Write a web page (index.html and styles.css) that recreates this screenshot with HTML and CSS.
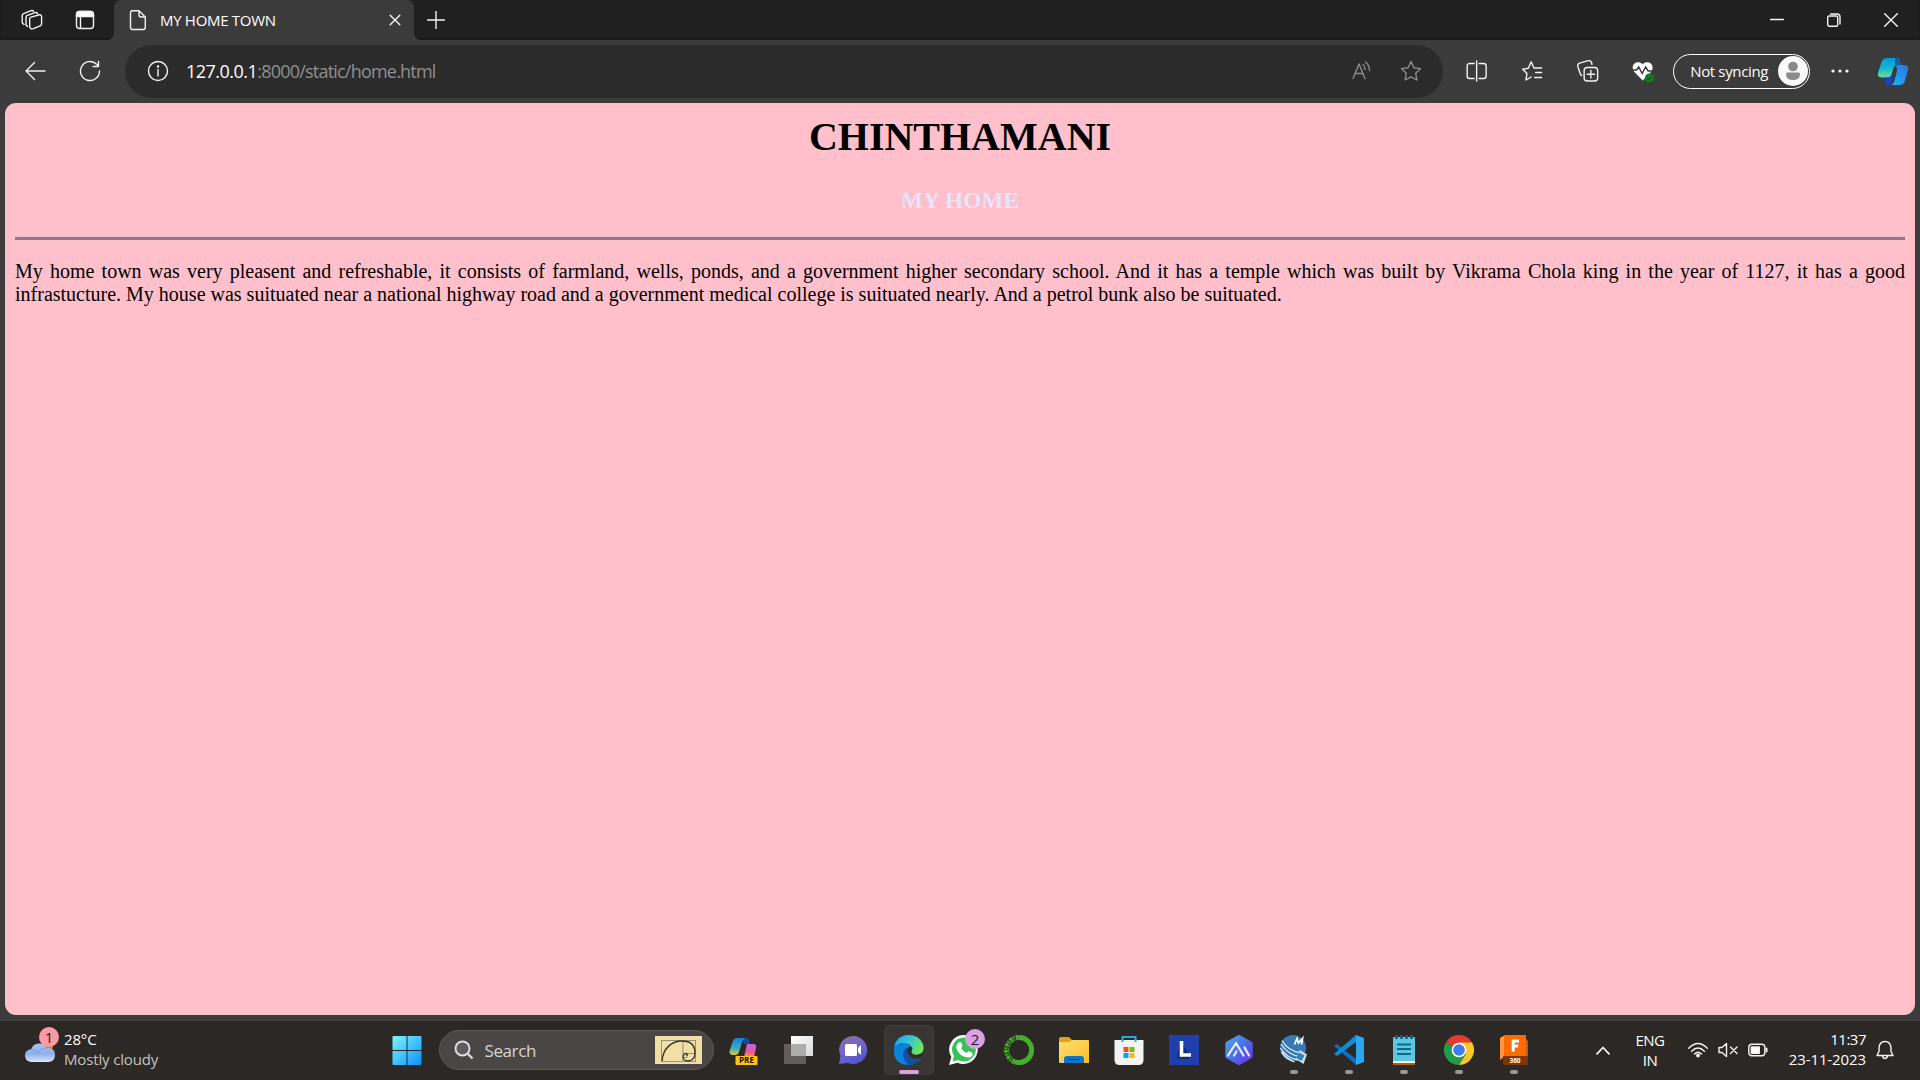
FILE: index.html
```html
<!DOCTYPE html>
<html lang="en">
<head>
<meta charset="utf-8">
<title>MY HOME TOWN</title>
<link rel="stylesheet" href="styles.css">
</head>
<body>
<header class="tabstrip">
  <div class="strip-tools">
    <svg class="line i22" viewBox="0 0 22 22"><path d="M8.600 10.200q0-1.500 1.400-2L17.600 6q3-.8 3 1.800v7q0 1.500-1.400 2l-6.800 2.800q-2.800 1-3.600-1z"/><path d="M6.500 17.500L5 15.700V8.500q0-1.500 1.400-2.100L14 3.700q1.600-.6 2.600.8"/><path d="M3 15.500L1.200 13.800V6.700q0-1.500 1.400-2.100L10 1.700q1.600-.6 2.600.6"/></svg>
    <svg class="line i22" viewBox="0 0 22 22"><rect x="2.500" y="2.500" width="17" height="17" rx="3"/><path class="fill" d="M2.500 6q0-3.500 3.500-3.500h10q3.500 0 3.500 3.500v1.500h-17z"/><path d="M6.500 8v11"/></svg>
  </div>
  <div class="tab">
    <svg class="line i22" viewBox="0 0 22 22"><path d="M4.500 1.800H12l6.300 6.200v10.300q0 2.200-2.200 2.200H5.500q-2 0-2-2.200V4q0-2.200 2-2.200M12 1.800V6q0 2 2 2h4.300"/></svg>
    <span class="tab-title">MY HOME TOWN</span>
    <svg class="line i12" viewBox="0 0 12 12"><path d="M1.200 1.200l9.600 9.600M10.800 1.200L1.200 10.800"/></svg>
  </div>
  <svg class="line newtab" viewBox="0 0 18 18"><path d="M9 .5v17M.5 9h17"/></svg>
  <div class="win-controls">
    <svg class="line i14" viewBox="0 0 14 14"><path d="M.5 6.500h13"/></svg>
    <svg class="line i14" viewBox="0 0 14 14"><rect x=".7" y="3" width="10" height="10.300" rx="1.500"/><path d="M3.500 1h6.500q3 0 3 3v7"/></svg>
    <svg class="line i14" viewBox="0 0 14 14"><path d="M.7 .7l12.600 12.600M13.300 .7L.7 13.300"/></svg>
  </div>
</header>

<nav class="toolbar">
  <div class="nav-buttons">
    <svg class="line i22" viewBox="0 0 22 22"><path d="M10.500 2.500L2 11l8.500 8.500M2 11h19"/></svg>
    <svg class="line i22" viewBox="0 0 22 22"><path d="M20.500 11a9.500 9.500 0 1 1-2.800-6.700l1.800 1.800M19.500 1.500v5h-5.300"/></svg>
  </div>
  <div class="address">
    <svg class="line i22" viewBox="0 0 22 22"><circle cx="11" cy="11" r="9.500"/><path d="M11 9.500V16"/><circle class="fill" cx="11" cy="6.500" r=".6"/></svg>
    <span class="url"><b>127.0.0.1</b>:8000/static/home.html</span>
    <svg class="line dim cell50" viewBox="0 0 22 22"><path d="M3 18.500L9 4l6 14.500M5 13.500h8"/><path d="M13 4.500q2 1.700 2 5M15.500 2q4 3 4 8.500"/></svg>
    <svg class="line dim cell50" viewBox="0 0 22 22"><path d="M11 1.500l2.900 6.200 6.700.9-4.900 4.700 1.200 6.700-5.900-3.200L5.100 20l1.200-6.700L1.400 8.600l6.700-.9z"/></svg>
  </div>
  <div class="actions">
    <svg class="line" viewBox="0 0 22 22"><path d="M8.500 3.500H4q-2.500 0-2.500 2.500v10q0 2.500 2.500 2.500h4.500M11 1v20M13.500 3.500H18q2.500 0 2.500 2.500v10q0 2.500-2.500 2.500h-4.500"/></svg>
    <svg class="line" viewBox="0 0 22 22"><path d="M10.500 17l-5.200 3 1-6.500L2 9.200l5.700-.9 2.800-6.500 2.800 6.200h7.700M15 12.500h6M14 17.500h7"/></svg>
    <svg class="line" viewBox="0 0 22 22"><rect x="7.500" y="7.500" width="13.500" height="13.500" rx="3"/><path d="M14.200 10.500v7.500M10.500 14.200H18M5 15.500q-1-.5-1.400-1.800L1.200 6.500Q.5 4 3 3.200l8.500-2.500q2.500-.5 3.300 1.800l.5 1.800"/></svg>
    <svg viewBox="0 0 22 22"><path fill="#fff" d="M11 20.500L2.700 12C-2.500 5 5.500-1 11 4.200c5.500-5.200 13.500.8 8.300 7.800z"/><path d="M0 10h5l2-3 3.500 6.500L14 7l2.500 4H22" fill="none" stroke="#3b3b3b" stroke-width="1.500"/><circle cx="17.800" cy="18" r="4.600" fill="#117d1d"/><path d="M15.800 18l1.500 1.500 2.600-3" fill="none" stroke="#0a450e"/></svg>
  </div>
  <div class="profile"><span>Not syncing</span>
    <svg viewBox="0 0 30 30"><circle cx="15" cy="15" r="15" fill="#fafafa"/><circle cx="15" cy="10.500" r="4.800" fill="#8a8a8a"/><path d="M9 16.500h12q1 0 1 1.500 0 6-7 6t-7-6q0-1.500 1-1.500" fill="#8a8a8a"/></svg>
  </div>
  <svg class="dots" viewBox="0 0 18 4"><circle cx="2" cy="2" r="1.600"/><circle cx="9" cy="2" r="1.600"/><circle cx="16" cy="2" r="1.600"/></svg>
  <svg class="copilot" viewBox="0 0 30 27" preserveAspectRatio="none">
    <defs>
      <linearGradient id="cpA" x1="0" y1="0" x2="0" y2="1"><stop offset="0" stop-color="#0797dc"/><stop offset=".5" stop-color="#13b6cf"/><stop offset="1" stop-color="#6bdc9a"/></linearGradient>
      <linearGradient id="cpB" x1="1" y1="0" x2="0" y2="1"><stop offset="0" stop-color="#2f6fe0"/><stop offset="1" stop-color="#14b8fa"/></linearGradient>
    </defs>
    <path fill="url(#cpA)" d="M9 0h10q2 0 2.500 2l1.500 5h-3q-3.500 0-4.500 3l-2 6.500q-.9 3-4 3H4q-5 0-4-4.500L3.500 4Q5 0 9 0"/>
    <path fill="#0f5f9e" d="M17 0h2q2 0 2.500 2l1.500 5h-3q-2 0-3 1z"/>
    <path fill="url(#cpB)" d="M20 7h6q5 0 4 5l-3.200 11q-1.200 4-5 4H13q2.500-1 3.500-4l2.500-10q.8-3-1.500-5z"/>
    <path fill="#1c3ed2" d="M7 19.500h2.500q3 0 4-2.500l1.500 2-1.500 5q-1 3-3.500 3-2 0-2.300-2.500z"/>
  </svg>
</nav>

<main class="page">
  <h1>CHINTHAMANI</h1>
  <h3>MY HOME</h3>
  <hr>
  <p>My home town was very pleasent and refreshable, it consists of farmland, wells, ponds, and a government higher secondary school. And it has a temple which was built by Vikrama Chola king in the year of 1127, it has a good infrastucture. My house was suituated near a national highway road and a government medical college is suituated nearly. And a petrol bunk also be suituated.</p>
</main>

<footer class="taskbar">
  <div class="weather">
    <svg viewBox="0 0 36 38">
      <defs><linearGradient id="cloud" x1="0" y1="0" x2="0" y2="1"><stop offset="0" stop-color="#a9c5f3"/><stop offset=".55" stop-color="#8faeea"/><stop offset="1" stop-color="#d6e6fb"/></linearGradient></defs>
      <circle cx="22" cy="20" r="6" fill="#f57a0a"/>
      <path fill="url(#cloud)" d="M6 36q-6-1-6-6.500Q0 24 6 23.500 8 17.500 14 17.500q5.500 0 7.500 4.500 8.500-1 8.500 7 0 6-6 7z"/>
      <path d="M4 24q6-1 9 3 3-5 9-5" fill="none" stroke="#7c9fe2"/>
    </svg>
    <span class="badge badge-news">1</span>
    <div class="weather-text"><span>28°C</span><span class="soft">Mostly cloudy</span></div>
  </div>

  <div class="app">
    <svg viewBox="0 0 30 30"><defs><linearGradient id="win" x1="0" y1="0" x2="1" y2="1"><stop offset="0" stop-color="#7df4ff"/><stop offset="1" stop-color="#0a91fb"/></linearGradient></defs><path fill="url(#win)" d="M.5 2q0-1 1-1h13v14H.5zM15.500 1h13q1 0 1 1v13h-14zM.5 16h14v14h-13q-1 0-1-1zM15.500 16h14v13q0 1-1 1h-13z"/></svg>
  </div>

  <div class="search">
    <svg class="lens" viewBox="0 0 20 20"><circle cx="8.500" cy="8.500" r="7" fill="#5f5b5a" stroke="#d9dbe0" stroke-width="2"/><path d="M13.500 13.500l5 5" stroke="#d9dbe0" stroke-width="2.400"/></svg>
    <span>Search</span>
    <svg class="doodle" viewBox="0 0 47 28"><rect width="47" height="28" fill="#f2dfa5"/><g fill="none" stroke="#999177" stroke-width="1"><rect x="6.500" y="4.500" width="34" height="21"/><path d="M28 4.500v21M28 17.500h12.500M32 17.500v4h-4"/></g><path d="M7 25C8 12 17 5 27 5c8 0 13 4 13 12 0 5-3 8-7 8-3 0-5-2-5-4 0-3 3-4 4-3v2" fill="none" stroke="#39352f" stroke-width="1.400"/></svg>
  </div>

  <div class="app">
    <svg viewBox="0 0 30 30"><defs><linearGradient id="preA" x1="0" y1="0" x2="0" y2="1"><stop offset="0" stop-color="#197ddc"/><stop offset=".6" stop-color="#37adc1"/><stop offset="1" stop-color="#e2c83a"/></linearGradient><linearGradient id="preB" x1="0" y1="0" x2="0" y2="1"><stop offset="0" stop-color="#b56bf0"/><stop offset=".6" stop-color="#ee5190"/><stop offset="1" stop-color="#fb9a62"/></linearGradient></defs>
      <path fill="#1547a8" d="M13 3h5q2 0 3 6h-6z"/><path fill="url(#preA)" d="M8 3h8q-2 1-3 4l-3 10q-1 3-4 3H4q-4 0-3.500-4L3.500 7Q4.500 3 8 3"/><path fill="url(#preB)" d="M18 9h6q4 0 3 4l-2 9H15z"/><rect x="6.500" y="21" width="22" height="9" rx="1" fill="#ffc20e"/><text x="17.500" y="28.300" class="pre">PRE</text></svg>
  </div>
  <div class="app">
    <svg viewBox="0 0 30 30"><defs><linearGradient id="tv" x1="0" y1="0" x2="1" y2="1"><stop offset="0" stop-color="#fff"/><stop offset="1" stop-color="#d8d8d8"/></linearGradient></defs><rect x="0" y="9" width="22" height="20" fill="#605f5e"/><rect x="7" y="1" width="22" height="20" fill="url(#tv)"/><rect x="7" y="9" width="15" height="12" fill="#adadad"/></svg>
  </div>
  <div class="app">
    <svg viewBox="1 0 30 30"><defs><linearGradient id="chat" x1="0" y1="0" x2=".5" y2="1"><stop offset="0" stop-color="#8b6b9b"/><stop offset=".5" stop-color="#7569c4"/><stop offset="1" stop-color="#5355d1"/></linearGradient></defs><path fill="url(#chat)" d="M15 1a14 14 0 1 1-5 27l-9 1 1.500-8A14 14 0 0 1 15 1"/><rect x="7" y="9" width="12" height="12" rx="1.500" fill="#fff"/><path fill="#fff" d="M20 13l3-3v10l-3-3z"/></svg>
  </div>
  <div class="app current">
    <svg viewBox="0 0 30 30"><defs><linearGradient id="edT" x1="0" y1="0" x2="1" y2=".5"><stop offset="0" stop-color="#1a9fe0"/><stop offset=".5" stop-color="#35c1dc"/><stop offset="1" stop-color="#6ce75b"/></linearGradient></defs>
      <path fill="#0c6fc4" d="M0 14Q1 0 15 0v28l2 2h-2Q1 30 0 14"/><path fill="#10509e" d="M11 13q-6 9 5 17 7 0 12-7-9 3-13-2-2-3 1-7z"/><path fill="url(#edT)" d="M.3 12Q3 0 15 0q10 0 14 9 3 11-9 11-5-1-2-5 0-7-9-7-5 0-8.700 4"/><path fill="#0b81da" d="M0 14Q3 7 10 8q5 1 7 4-5-1-7 4-3 8 4 14Q-1 29 0 14"/><path fill="#2f2d2c" d="M13 15q1-3.500 5-3 1 1 0 3-2 4 4 5 4 0 7-2l-1 4q-6 2-11-1-4-2-4-6"/></svg>
    <i class="running"></i>
  </div>
  <div class="app">
    <svg viewBox="0 0 30 30"><path fill="#fff" d="M15 0a14.500 14.500 0 1 1-6.500 27.800L0 30l2.300-8A14.500 14.500 0 0 1 15 0"/><path fill="#36c256" d="M15 2.500a12 12 0 1 1-6 22.500l-5.500 1.500L5 21A12 12 0 0 1 15 2.500"/><path fill="#fff" d="M9 8l2-1q1 0 1.500 1.300l1 2.500q0 1-1.500 2.200 2 3.500 5.500 5 1.500-2 2.500-1.700l3 1.500q1 .7.500 2-1 3-4.500 2.800Q10 21.500 7.300 13q-.5-3 1.700-5"/></svg>
    <span class="badge badge-chat">2</span>
  </div>
  <div class="app">
    <svg viewBox="0 0 30 30"><path d="M15 2.500a12.500 12.500 0 1 1-4 24.300" fill="none" stroke="#43b02a" stroke-width="5"/><path d="M11 26.800A12.500 12.500 0 0 1 15 2.500" fill="none" stroke="#43b02a" stroke-width="5" stroke-dasharray="3 .8 1.500 1"/><path d="M9 25A12.500 12.500 0 0 1 12 3" fill="none" stroke="#2c2926" stroke-width="1" stroke-dasharray="2 2"/></svg>
  </div>
  <div class="app">
    <svg viewBox="0 0 30 30"><defs><linearGradient id="fold" x1="0" y1="0" x2="1" y2="1"><stop offset="0" stop-color="#ffdf78"/><stop offset="1" stop-color="#fdbf22"/></linearGradient></defs><path fill="#e5a00d" d="M0 4q0-2 2-2h8l3 3h15v6H0z"/><path fill="url(#fold)" d="M0 7h10l3-2h16q1 0 1 1v22H1q-1 0-1-1z"/><path fill="#0f73c9" d="M5 28v-4q0-3 3-3h14q3 0 3 3v4z"/><path d="M9 24.500h12" stroke="#0a4a8a"/></svg>
  </div>
  <div class="app">
    <svg viewBox="0 0 30 30"><path d="M8.500 8V2h13v6" fill="none" stroke="#28aae1" stroke-width="2"/><path fill="#f3f3f3" d="M.5 5h29v20q0 5-5 5h-19q-5 0-5-5z"/><path d="M8.500 5v2M21.500 5v2" stroke="#28aae1" stroke-width="2"/><path fill="#f25022" d="M9.500 12h5v5h-5z"/><path fill="#7fba00" d="M15.500 12h5v5h-5z"/><path fill="#00a4ef" d="M9.500 18h5v5h-5z"/><path fill="#ffb900" d="M15.500 18h5v5h-5z"/></svg>
  </div>
  <div class="app">
    <svg viewBox="0 0 30 30"><rect width="30" height="30" fill="#1f3fae"/><path fill="#123069" d="M11 7l-3 15v2h12l2-3z"/><path d="M12.500 6v14H22" fill="none" stroke="#fff" stroke-width="3.600"/></svg>
  </div>
  <div class="app">
    <svg viewBox="0 0 30 30"><defs><linearGradient id="hex" x1="0" y1="0" x2="1" y2="1"><stop offset="0" stop-color="#4ea3e5"/><stop offset=".5" stop-color="#4c6fe3"/><stop offset="1" stop-color="#6a32f0"/></linearGradient></defs><path fill="url(#hex)" stroke="url(#hex)" stroke-width="4" stroke-linejoin="round" d="M15 2l11.700 6.500v13L15 28 3.300 21.500v-13z"/><path d="M4 20.500L12 8l7.500 12.500M10 20.500l2.500-4M20.500 12.500l4.500 8" fill="none" stroke="#e8ecff" stroke-width="2.200" stroke-linecap="round" stroke-linejoin="round"/></svg>
  </div>
  <div class="app">
    <svg viewBox="0 0 30 30"><circle cx="14" cy="13" r="13" fill="#3779b5"/><path d="M2 9q7 11 19 12.500M1.500 13q6 10 17 12M3 5.500Q9 16 22 18M2.500 17q5 7 13 10" fill="none" stroke="#e3edf5" stroke-width="1.300"/><path fill="#d5dde3" d="M21 15l7 4.500-3.500 9.500-8-5z"/><path fill="#2786b8" d="M20 17.500l5.500 3-3 5.500-5.500-3z"/><path d="M15.500 9.500l2.500-6 1.500 4.500 4-4.500-1 6" fill="none" stroke="#fff" stroke-width="1.800"/></svg>
    <i class="running"></i>
  </div>
  <div class="app">
    <svg viewBox="0 0 30 30"><path fill="#0d6dbd" d="M0 11l3-2 19 15v6z"/><path fill="#158bd5" d="M0 19l3 2L22 7V0z"/><path fill="#2ba7f2" d="M22 0l8 3v24l-8 3z"/></svg>
    <i class="running"></i>
  </div>
  <div class="app">
    <svg viewBox="0 0 30 30"><path fill="#b75a14" d="M4 26h22v4H4z"/><path fill="#f5f2ec" d="M4 25h22v3H4z"/><rect x="4" y="2" width="22" height="24" rx="1" fill="#5cc5df"/><path d="M8 9.500h14M8 14h14M8 19h14" stroke="#11678a" stroke-width="1.800"/><path d="M7.500 0v4M12.500 0v4M17.500 0v4M22.500 0v4" stroke="#145c7b" stroke-width="2.500"/></svg>
    <i class="running"></i>
  </div>
  <div class="app">
    <svg viewBox="0 0 30 30"><path fill="#e33b2e" d="M15 15L2 7.500a15 15 0 0 1 26 0z"/><path fill="#249a49" d="M15 15v0L2 7.500A15 15 0 0 0 15 30l7-11z"/><path fill="#fcc629" d="M15 7.500h13A15 15 0 0 1 15 30l7-11z"/><circle cx="15" cy="15" r="7.300" fill="#fff"/><circle cx="15" cy="15" r="5.800" fill="#3a7ded"/></svg>
    <i class="running"></i>
  </div>
  <div class="app">
    <svg viewBox="0 0 30 30"><path fill="#ff9547" d="M1 3l5-3v21l-5 4z"/><path fill="#ff6b00" d="M5 2q0-2 2-2h20v22H5z"/><path fill="#c95a08" d="M27 4l2 2v17h-2z"/><path fill="#803600" d="M4 21h25v9H7q-3 0-3-2z"/><path d="M14.200 16.500V6H20M14.200 11h5" fill="none" stroke="#fff" stroke-width="3"/><text x="16" y="28" class="pre f360">360</text></svg>
    <i class="running"></i>
  </div>

  <div class="tray">
    <svg class="line chevron" viewBox="0 0 14 9"><path d="M1 7.800L7 1.500l6 6.300"/></svg>
    <div class="lang"><span>ENG</span><span>IN</span></div>
    <div class="status">
      <svg class="line" viewBox="0 0 20 16"><path d="M.7 6.200q9.300-9.500 18.600 0M3.600 9.200q6.400-6.500 12.800 0M6.500 12q3.500-3.600 7 0"/><circle class="fill" cx="10" cy="13.500" r="1.200"/></svg>
      <svg class="line" viewBox="0 0 20 16"><path d="M1 5.500h3l4.500-4v13l-4.500-4H1zM12.500 5l6.500 6.500M19 5l-6.500 6.500"/></svg>
      <svg class="line" viewBox="0 0 20 16"><rect x=".8" y="2.300" width="16" height="11.500" rx="3"/><rect class="fill" x="3.300" y="5" width="8" height="6.200"/><path d="M18.500 6.500v3" stroke-width="2"/></svg>
    </div>
    <div class="clock"><span>11:37</span><span class="date">23-11-2023</span></div>
    <svg class="line bell" viewBox="0 0 18 20"><path d="M1 15.500l2-4V8q.5-6.500 6-6.500T15 8v3.500l2 4zM6.500 16q.5 2.500 2.500 2.500t2.500-2.500"/></svg>
  </div>
</footer>
</body>
</html>
```
FILE: styles.css
```css
* { box-sizing: border-box; }
body {
  margin: 0;
  width: 1920px;
  height: 1080px;
  overflow: hidden;
  display: grid;
  grid-template-rows: 40px 63px 912px 65px;
  background: #3b3b3b;
  color: #fff;
  font-family: "Open Sans", "Noto Sans", sans-serif;
}
svg { display: block; flex: none; }
.line { fill: none; stroke: #f2f2f2; stroke-width: 1.4; stroke-linecap: round; stroke-linejoin: round; }
.line .fill { fill: #fff; }
.dim { stroke: #8c8c8c; }
.i22 { width: 22px; height: 22px; }
.i14 { width: 14px; height: 14px; }
.i12 { width: 12px; height: 12px; }

.tabstrip { display: flex; background: #202020; box-shadow: inset 0 -2px 2px #1a1a1a; }
.strip-tools { width: 114px; display: flex; align-items: center; gap: 31px; padding-left: 21px; }
.tab { position: relative; width: 300px; display: flex; align-items: center; padding: 0 13.5px 0 13px; background: #3b3b3b; border-radius: 7px 7px 0 0; }
.tab::before, .tab::after { content: ""; position: absolute; bottom: 0; width: 6px; height: 6px; }
.tab::before { left: -6px; background: radial-gradient(circle at 0 0, transparent 5.5px, #3b3b3b 6px); }
.tab::after { right: -6px; background: radial-gradient(circle at 100% 0, transparent 5.5px, #3b3b3b 6px); }
.tab-title { flex: 1; padding: 0 0 1px 11px; font-size: 15px; letter-spacing: -0.3px; line-height: 20px; }
.newtab { width: 18px; height: 18px; margin: 11px 0 0 12.5px; }
.win-controls { margin-left: auto; display: flex; gap: 43px; padding: 13px 22px 0 0; }

.toolbar { display: flex; align-items: center; padding-bottom: 1px; }
.nav-buttons { width: 125px; display: flex; gap: 33px; padding-left: 24px; }
.address { width: 1318px; height: 53px; border-radius: 27px; background: #2b2b2b; display: flex; align-items: center; padding: 0 7px 0 21.5px; }
.url { flex: 1; padding-left: 17.5px; font-size: 18px; letter-spacing: -0.79px; color: #8f8f8f; }
.url b { font-weight: 400; color: #fff; letter-spacing: -0.52px; }
.cell50 { width: 50px; height: 22px; }
.actions { display: flex; padding-left: 6px; }
.actions svg { width: 55.3px; height: 22px; }
.profile { width: 137px; height: 35px; margin-left: 3px; border: 1.5px solid #fff; border-radius: 18px; display: flex; align-items: center; justify-content: space-between; padding: 0 1px 0 16px; font-size: 15px; letter-spacing: -0.35px; white-space: nowrap; }
.profile span { padding-bottom: 1px; }
.profile svg { width: 30px; height: 30px; }
.dots { width: 18px; height: 4px; margin-left: 21px; fill: #fff; }
.copilot { width: 30px; height: 27px; margin-left: 29px; }

.page { margin: 0 5px; padding: 11px 10px 10px; border-radius: 11px; background: #ffc0cb; color: #000; font: 20px/23px "Liberation Serif", serif; }
.page h1 { margin: 0; font-size: 40px; line-height: 46px; text-align: center; }
.page h3 { margin: 27px 0 0; font-size: 23.4px; line-height: 27px; text-align: center; color: #e6e6fa; }
.page hr { margin: 23px 0 0; height: 3px; border: 0; background: #808080; }
.page p { margin: 20px 0 0; text-align: justify; }

.taskbar { margin-top: 5px; height: 60px; display: flex; align-items: center; background: #2c2825; box-shadow: inset 0 1px #474443; }
.weather { position: relative; width: 379px; display: flex; align-items: center; padding-left: 25px; }
.weather > svg { width: 36px; height: 38px; margin-top: -10px; }
.weather-text { display: grid; padding: 0 0 2px 3px; font-size: 15px; line-height: 20px; letter-spacing: -0.15px; }
.soft { color: #c4c2c1; }
.badge { position: absolute; width: 20px; height: 20px; border-radius: 50%; color: #222; font-size: 15px; line-height: 20px; text-align: center; }
.badge-news { left: 39px; top: -2px; background: #ff99a4; }
.badge-chat { left: 29px; top: 4px; background: #dba0e3; }
.app { position: relative; flex: none; width: 55px; height: 50px; display: grid; place-items: center; }
.app svg { width: 30px; height: 30px; }
.current::before { content: ""; position: absolute; inset: 0 2.5px; border-radius: 5px; border: 1px solid #403d3b; background: #383533; }
.current svg { position: relative; }
.running { position: absolute; left: 23.5px; bottom: 1px; width: 8px; height: 4px; border-radius: 2px; background: #9a9896; }
.current .running { left: 17.5px; width: 20px; background: #dba0e3; }
.pre { font: 700 8px "Open Sans", sans-serif; text-anchor: middle; fill: #111; }
.f360 { fill: #fff; font-size: 6.5px; }
.search { width: 275px; height: 40px; margin: 0 2px 0 5px; border-radius: 20px; border: 1px solid #5d5958; background: #4a4645; display: flex; align-items: center; padding: 0 11.5px 0 14px; font-size: 17px; letter-spacing: -0.4px; color: #d8d6d5; }
.search .lens { width: 20px; height: 20px; }
.search span { flex: 1; padding-left: 10.5px; }
.doodle { width: 47px; height: 28px; }

.tray { flex: 1; display: flex; align-items: center; font-size: 15px; line-height: 20px; padding-left: 54.5px; }
.chevron { width: 14px; height: 9px; stroke-width: 1.8; }
.lang { width: 32px; margin-left: 24.5px; display: grid; text-align: center; letter-spacing: -0.5px; }
.status { display: flex; gap: 10px; margin-left: 22px; }
.status svg { width: 20px; height: 16px; }
.clock { width: 98px; display: grid; padding-bottom: 2px; text-align: right; letter-spacing: -0.5px; }
.date { letter-spacing: -0.1px; }
.bell { width: 18px; height: 20px; margin-left: 10px; }
```
